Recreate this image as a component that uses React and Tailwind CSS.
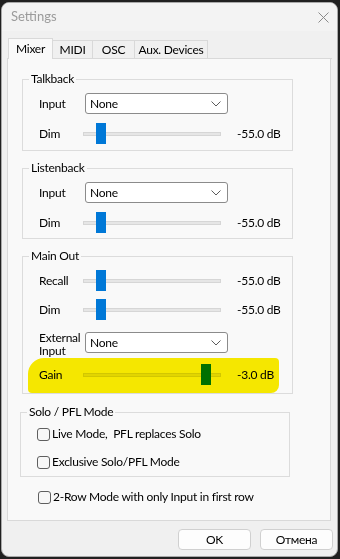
import React from 'react';

const font = { fontFamily: 'Lato, "Noto Sans", "Liberation Sans", sans-serif' };

const Select = () => (
    <div className="w-[143px] h-[21px] bg-white border border-[#8b8b8b] rounded-[3px] flex items-center justify-between pl-[4px] pr-[6px]">
        <span>None</span>
        <svg width="10" height="6" viewBox="0 0 10 6">
            <path d="M0.5 0.5 L5 5 L9.5 0.5" fill="none" stroke="#5c5c5c" strokeWidth="1" />
        </svg>
    </div>
);

const Slider = ({ thumb }) => (
    <div className="relative w-[138px] h-[21px] flex items-center">
        <div className="w-full h-[4px] bg-[#e6e6e6] border border-[#d6d6d6]" />
        <div className={`absolute top-0 w-[10px] h-[21px] bg-[#0078d7] ${thumb}`} />
    </div>
);

const SelectRow = ({ label }) => (
    <div className="flex items-center">
        <span className="w-[46px]">{label}</span>
        <Select />
    </div>
);

const SliderRow = ({ label, thumb = 'left-[13px]', value = '-55.0 dB' }) => (
    <div className="flex items-center">
        <span className="w-[44px]">{label}</span>
        <Slider thumb={thumb} />
        <span className="ml-[16px]">{value}</span>
    </div>
);

const Group = ({ title, className, children }) => (
    <fieldset className={`border border-[#dcdcdc] ${className}`}>
        <legend className="ml-[6px] px-[2px] leading-[16px]">{title}</legend>
        {children}
    </fieldset>
);

const Check = ({ label, className = '' }) => (
    <label className={`flex items-center gap-[2px] h-[16px] ${className}`}>
        <span className="w-[13px] h-[13px] rounded-[3px] border border-[#5f5f5f] bg-[#f7f7f7]" />
        <span>{label}</span>
    </label>
);

const tabs = [
    { label: 'Mixer', w: 'w-[45px]', active: true },
    { label: 'MIDI', w: 'w-[41px]' },
    { label: 'OSC', w: 'w-[43px]' },
    { label: 'Aux. Devices', w: 'w-[74px]' },
];

export default function App() {
    return (
        <div className="w-[340px] h-[559px] bg-[#202020] pt-[2px] pl-[1px] text-[12px] tracking-[-0.25px] text-black" style={font}>
            <div className="w-[337px] h-[555px] rounded-[8px] bg-[#f0f0f0] border border-[#a9a9a9] overflow-hidden">
                {/* Title bar */}
                <div className="h-[28px] bg-[#f3f3f3] flex items-center justify-between pl-[9px] pr-[8px]">
                    <span className="text-[#9b9b9b] text-[13px] tracking-normal">Settings</span>
                    <svg width="11" height="11" viewBox="0 0 11 11">
                        <path d="M0.5 0.5 L10.5 10.5 M10.5 0.5 L0.5 10.5" stroke="#8a8a8a" strokeWidth="1" />
                    </svg>
                </div>

                <div className="px-[5px] pt-[7px]">
                    {/* Tabs */}
                    <div className="flex items-end h-[21px]">
                        <div className="w-[1px] h-[1px] border-b border-[#d9d9d9]" />
                        {tabs.map((t, i) => (
                            <div
                                key={t.label}
                                className={`${t.w} ${i > 0 ? '-ml-[1px]' : ''} flex items-center justify-center border-t border-x border-[#d9d9d9] ${t.active ? 'h-[21px] bg-[#f9f9f9] pb-[1px]' : 'h-[19px] border-b bg-[#f0f0f0]'}`}
                            >
                                {t.label}
                            </div>
                        ))}
                        <div className="flex-1 h-[1px] border-b border-[#d9d9d9]" />
                    </div>

                    {/* Panel */}
                    <div className="w-[324px] h-[462px] bg-[#f9f9f9] border-x border-b border-[#d9d9d9] pt-[12px]">
                        <Group title="Talkback" className="ml-[14px] w-[271px] pb-[6px]">
                            <div className="mt-[6px] pl-[16px] flex flex-col gap-[9px]">
                                <SelectRow label="Input" />
                                <SliderRow label="Dim" />
                            </div>
                        </Group>

                        <Group title="Listenback" className="ml-[14px] w-[271px] pb-[5px] mt-[9px]">
                            <div className="mt-[6px] pl-[16px] flex flex-col gap-[9px]">
                                <SelectRow label="Input" />
                                <SliderRow label="Dim" />
                            </div>
                        </Group>

                        <Group title="Main Out" className="relative ml-[14px] w-[271px] pb-[8px] mt-[9px]">
                            <div className="mt-[6px] pl-[16px] flex flex-col">
                                <SliderRow label="Recall" />
                                <div className="mt-[8px]"><SliderRow label="Dim" /></div>
                                <div className="mt-[12px] flex items-center h-[21px]">
                                    <span className="w-[46px] h-[21px] flex flex-col justify-center leading-[13px] pt-[2px]">
                                        <span>External</span>
                                        <span>Input</span>
                                    </span>
                                    <Select />
                                </div>
                                <div className="mt-[11px]"><SliderRow label="Gain" thumb="left-[118px]" value="-3.0 dB" /></div>
                            </div>
                            {/* highlighter mark */}
                            <div className="absolute left-[5px] top-[94px] w-[251px] h-[35px] rounded-[4px] rounded-tl-[16px] rounded-br-[8px] bg-[#fbed00] mix-blend-multiply" />
                        </Group>

                        <Group title="Solo / PFL Mode" className="ml-[12px] w-[270px] pb-[6px] mt-[10px]">
                            <div className="mt-[6px] pl-[16px] flex flex-col gap-[12px]">
                                <Check label={'Live Mode,\u00a0 PFL replaces Solo'} />
                                <Check label="Exclusive Solo/PFL Mode" />
                            </div>
                        </Group>

                        <Check label="2-Row Mode with only Input in first row" className="ml-[30px] mt-[12px]" />
                    </div>

                    {/* Buttons */}
                    <div className="flex justify-end gap-[9px] mt-[8px] -mr-[1px]">
                        <button className="w-[73px] h-[21px] rounded-[4px] border border-[#d0d0d0] bg-[#fdfdfd]">OK</button>
                        <button className="w-[73px] h-[21px] rounded-[4px] border border-[#d0d0d0] bg-[#fdfdfd]">Отмена</button>
                    </div>
                </div>
            </div>
        </div>
    );
}
